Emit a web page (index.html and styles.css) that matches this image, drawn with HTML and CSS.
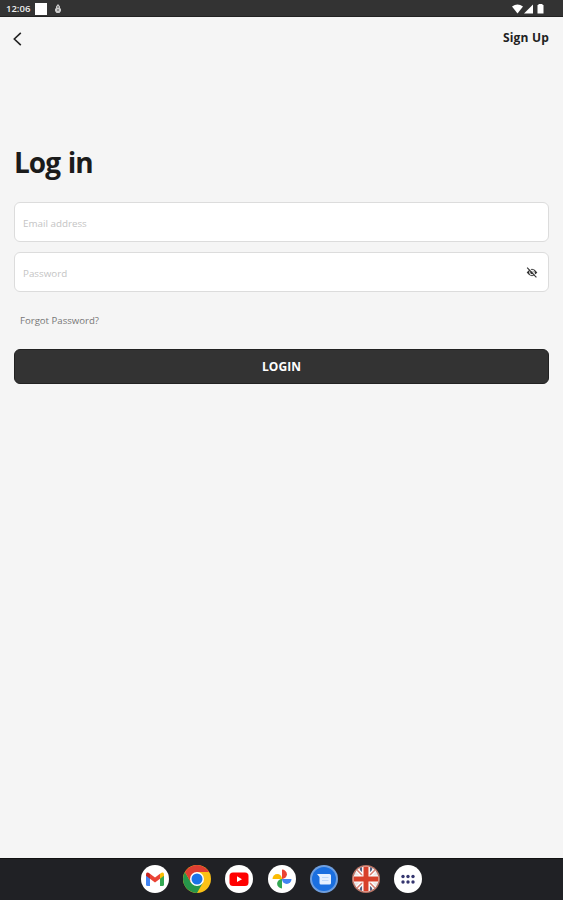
FILE: index.html
```html
<!DOCTYPE html>
<html lang="en">

<head>
  <meta charset="UTF-8" />
  <meta name="viewport" content="width=device-width, initial-scale=1.0" />
  <title>Log in</title>
  <link rel="stylesheet" href="styles.css">
</head>

<body>
  <div class="status-bar">
    <span class="time">12:06</span>
    <span class="square"></span>
    <svg class="debug" width="6" height="9" viewBox="0 0 6 9">
      <path d="M3 0L5 2.500V4L6 5V7L4.500 9H1.500L0 7V5L1 4V2.500Z" fill="#ccc" />
      <path d="M3 2V4M2 6H4" stroke="#555" />
    </svg>
    <svg class="signal" width="33" height="10" viewBox="0 0 33 10">
      <path d="M0 2.500Q5.500-1.500 11 2.500L5.500 9.500Z" fill="#fff" />
      <path d="M12 9.500L21 .5V9.500Z" fill="#fff" />
      <path d="M25.500 1.500L27 0H30L31.500 1.500V9.500H25.500Z" fill="#fff" />
    </svg>
  </div>

  <div class="header">
    <a class="back" href="#" aria-label="Back">
      <svg width="9" height="14" viewBox="0 0 9 14">
        <path d="M7.800 .8L1.300 7L7.800 13.200" fill="none" stroke="#222" stroke-width="1.600" />
      </svg>
    </a>
    <a class="sign-up" href="#">Sign Up</a>
  </div>

  <form class="login">
    <h1>Log in</h1>
    <div class="field">
      <input type="email" placeholder="Email address" />
    </div>
    <div class="field">
      <input type="password" placeholder="Password" />
      <svg width="12" height="11" viewBox="0 0 13 12">
        <path d="M.7 6Q6.500-2 12.300 6Q6.500 14 .7 6Z" fill="#333" />
        <circle cx="6.500" cy="6" r="2.900" fill="#fff" />
        <circle cx="6.500" cy="6" r="1.900" fill="#333" />
        <path d="M2.200 .3L12 10.600" stroke="#fff" stroke-width="1.100" />
        <path d="M1.200 .8L11.300 11.300" stroke="#333" stroke-width="1.200" />
      </svg>
    </div>
    <a class="forgot" href="#">Forgot Password?</a>
    <button type="button">LOGIN</button>
  </form>

  <div class="dock">
    <svg viewBox="0 0 28 28">
      <circle cx="14" cy="14" r="14" fill="#fff" />
      <path d="M5 9.500L9 12.500V21H6.500Q5 21 5 19.500Z" fill="#4285f4" />
      <path d="M19 12.500L23 9.500V19.500Q23 21 21.500 21H19Z" fill="#34a853" />
      <path d="M9 8.800L14 12.600L19 8.800V13.800L14 17.600L9 13.800Z" fill="#ea4335" />
      <path d="M5 9.800Q5 6 9 8.800V13.800L5 10.800Z" fill="#c5221f" />
      <path d="M23 9.800Q23 6 19 8.800V13.800L23 10.800Z" fill="#fbbc04" />
    </svg>
    <svg viewBox="0 0 28 28">
      <circle cx="14" cy="14" r="14" fill="#fbc116" />
      <path d="M1.880 7A14 14 0 0 0 14 28L20 17.500L14 14L8 17.500Z" fill="#26964a" />
      <path d="M1.880 7A14 14 0 0 1 26.120 7H14L8 17.500Z" fill="#df3e32" />
      <circle cx="14" cy="14" r="7" fill="#fff" />
      <circle cx="14" cy="14" r="5.500" fill="#1a73e8" />
    </svg>
    <svg viewBox="0 0 28 28">
      <circle cx="14" cy="14" r="14" fill="#fff" />
      <rect x="4.500" y="7.500" width="19" height="13.500" rx="3.500" fill="#f00" />
      <path d="M12 11.300L17 14.200L12 17.100Z" fill="#fff" />
    </svg>
    <svg viewBox="0 0 28 28">
      <circle cx="14" cy="14" r="14" fill="#fff" />
      <path d="M14 14V4.500A4.900 4.750 0 0 1 14 14Z" fill="#ea4335" />
      <path d="M14 14H23.500A4.750 4.900 0 0 1 14 14Z" fill="#4285f4" />
      <path d="M14 14V23.500A4.900 4.750 0 0 1 14 14Z" fill="#34a853" />
      <path d="M14 14H4.500A4.750 4.900 0 0 1 14 14Z" fill="#fbbc04" />
    </svg>
    <svg viewBox="0 0 28 28">
      <circle cx="14" cy="14" r="14" fill="#6f9fdf" />
      <circle cx="14" cy="14" r="12" fill="#1a6fe0" />
      <path d="M7 9H19.500Q21 9 21 10.500V18Q21 19.500 19.500 19.500H11Q9.500 19.500 9.500 18V12Z" fill="#e5f0ff" />
      <path d="M12 12.500H18.500M12 15.500H18.500" stroke="#c0d9fa" />
    </svg>
    <svg viewBox="0 0 28 28">
      <defs>
        <clipPath id="flag"><circle cx="14" cy="14" r="12.500" /></clipPath>
      </defs>
      <circle cx="14" cy="14" r="14" fill="#bd7667" />
      <g clip-path="url(#flag)">
        <rect width="28" height="28" fill="#e9e4e4" />
        <path d="M9 2V8M19 2V8M9 26V20M19 26V20" stroke="#536184" stroke-width="2" />
        <path d="M3 3L25 25M25 3L3 25" stroke="#fff" stroke-width="4" />
        <path d="M3 3L25 25M25 3L3 25" stroke="#d97a6c" stroke-width="1.500" />
        <path d="M14 0V28M0 14H28" stroke="#fff" stroke-width="7" />
        <path d="M14 0V28M0 14H28" stroke="#d8402a" stroke-width="5" />
      </g>
    </svg>
    <svg viewBox="0 0 28 28">
      <circle cx="14" cy="14" r="14" fill="#fff" />
      <g fill="#35366f">
        <circle cx="9" cy="11.500" r="1.700" />
        <circle cx="14" cy="11.500" r="1.700" />
        <circle cx="19" cy="11.500" r="1.700" />
        <circle cx="9" cy="17" r="1.700" />
        <circle cx="14" cy="17" r="1.700" />
        <circle cx="19" cy="17" r="1.700" />
      </g>
    </svg>
  </div>
</body>

</html>
```
FILE: styles.css
```css
* {
  box-sizing: border-box;
}

body {
  margin: 0;
  height: 900px;
  display: flex;
  flex-direction: column;
  overflow: hidden;
  background-color: #f5f5f5;
  font-family: "Open Sans", sans-serif;
}

a {
  text-decoration: none;
}

svg {
  display: block;
}

.status-bar {
  height: 17px;
  padding: 1px 18px 0 6px;
  display: flex;
  align-items: center;
  background-color: #333;
  border-bottom: 1px solid #222;
}

.time {
  width: 29px;
  color: #eee;
  font-size: 9.5px;
  font-weight: 600;
  line-height: 15px;
}

.square {
  width: 12px;
  height: 12px;
  background-color: #fff;
}

.debug {
  margin-left: 8px;
}

.signal {
  margin-left: auto;
}

.header {
  height: 43px;
  padding: 0 14px 0 13px;
  display: flex;
  align-items: center;
  justify-content: space-between;
}

.sign-up {
  padding-bottom: 2px;
  color: #222;
  font-size: 12px;
  font-weight: 700;
  letter-spacing: 0.2px;
}

.login {
  flex: 1;
  padding: 82px 14px 0;
}

h1 {
  margin: 0 0 20px;
  color: #1b1b1b;
  font-size: 28px;
  font-weight: 700;
  line-height: 40px;
  letter-spacing: -1px;
  word-spacing: 1.5px;
}

.field {
  height: 40px;
  margin-bottom: 10px;
  padding: 1px 10px 0 8px;
  display: flex;
  align-items: center;
  background-color: #fff;
  border: 1px solid #dcdcdc;
  border-radius: 6px;
}

.field input {
  flex: 1;
  min-width: 0;
  padding: 1px 0 0;
  border: 0;
  outline: 0;
  background: none;
  font-family: inherit;
  font-size: 9.8px;
}

.field input::placeholder {
  color: #c4c4c4;
}

.forgot {
  display: block;
  margin: 20px 0 20px 6px;
  color: #777;
  font-size: 9.6px;
  line-height: 17px;
}

button {
  display: block;
  width: 100%;
  height: 35px;
  padding: 0;
  border: 1px solid #222;
  border-radius: 6px;
  background-color: #333;
  color: #fff;
  font-family: inherit;
  font-size: 12px;
  font-weight: 700;
  letter-spacing: 0.1px;
}

.dock {
  height: 42px;
  padding-bottom: 1px;
  display: flex;
  align-items: center;
  justify-content: center;
  gap: 14.2px;
  background-color: #202125;
  border-top: 1px solid #111;
}

.dock svg {
  width: 28px;
  height: 28px;
}
```
